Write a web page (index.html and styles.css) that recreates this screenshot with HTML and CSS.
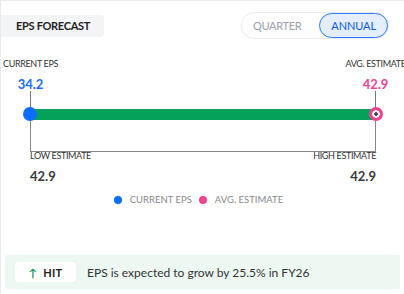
FILE: index.html
```html
<!DOCTYPE html>
<html lang="en">
<head>
    <meta charset="UTF-8">
    <meta name="viewport" content="width=device-width, initial-scale=1.0">
    <title>EPS Forecast</title>
    <link rel="stylesheet" href="styles.css">
</head>
<body>

    <div class="card">
        <div class="head">
            <div class="tab">EPS FORECAST</div>
            <div class="toggle">
                <span class="opt">QUARTER</span>
                <span class="opt active">ANNUAL</span>
            </div>
        </div>

        <div class="scale">
            <div class="pins">
                <div class="pin">
                    <span class="pin-label">CURRENT EPS</span>
                    <span class="pin-value current">34.2</span>
                    <span class="stem"></span>
                </div>
                <div class="pin">
                    <span class="pin-label">AVG. ESTIMATE</span>
                    <span class="pin-value avg">42.9</span>
                    <span class="stem"></span>
                </div>
            </div>
            <div class="bar">
                <span class="dot dot-current"></span>
                <span class="dot dot-avg"></span>
            </div>
            <div class="bracket"></div>
            <div class="ends">
                <div class="end">
                    <span class="end-label">LOW ESTIMATE</span>
                    <span class="end-value">42.9</span>
                </div>
                <div class="end end-right">
                    <span class="end-label">HIGH ESTIMATE</span>
                    <span class="end-value">42.9</span>
                </div>
            </div>
        </div>

        <div class="legend">
            <span class="key"><i class="swatch blue"></i>CURRENT EPS</span>
            <span class="key"><i class="swatch pink"></i>AVG. ESTIMATE</span>
        </div>

        <div class="note">
            <span class="badge"><span class="arrow">&#8593;</span>HIT</span>
            <span class="note-text">EPS is expected to grow by 25.5% in FY26</span>
        </div>
    </div>

</body>
</html>
```

FILE: styles.css
```css
body {
    margin: 0;
    font-family: Lato, "Open Sans", sans-serif;
    color: #333;
    background: #fff;
    overflow: hidden;
}
.card {
    border-left: 1px solid #e9ebef;
    border-top: 1px solid #e9ebef;
    height: 300px;
}

/* header */
.head {
    display: flex;
    justify-content: space-between;
    align-items: center;
    padding: 11px 15px 0 0;
}
.tab {
    background: #f3f4f6;
    border-radius: 0 4px 4px 0;
    padding: 0 14px 0 15px;
    height: 22px;
    line-height: 22px;
    font-size: 11px;
    font-weight: 700;
    letter-spacing: -0.3px;
    color: #222;
}
.toggle {
    display: flex;
    align-items: center;
    border: 1px solid #e8eaee;
    border-radius: 14px;
    height: 25px;
    padding-left: 11px;
}
.opt {
    font-size: 11px;
    letter-spacing: -0.3px;
    color: #9ca1ab;
    padding-right: 18px;
}
.opt.active {
    color: #0b5ddc;
    background: #e4eefe;
    border: 1px solid #2b7bf2;
    border-radius: 13px;
    height: 23px;
    line-height: 23px;
    padding: 0 11px;
    letter-spacing: -0.1px;
}

/* range chart */
.scale {
    padding: 0 28px 0 29px;
}
.pins {
    display: flex;
    justify-content: space-between;
    margin-top: 19px;
}
.pin {
    width: 1px;
    display: flex;
    flex-direction: column;
    align-items: center;
}
.pin-label {
    white-space: nowrap;
    font-size: 9px;
    line-height: 12px;
    letter-spacing: -0.35px;
    color: #333;
}
.pin-value {
    font-size: 13px;
    font-weight: 700;
    line-height: 14px;
    margin-top: 7px;
}
.pin-value.current { color: #1a6ef5; }
.pin-value.avg { color: #f2418f; }
.stem {
    width: 1px;
    height: 18px;
    background: #777;
}
.bar {
    position: relative;
    height: 11px;
    background: #04a15b;
}
.dot {
    position: absolute;
    top: -2px;
    width: 14px;
    height: 14px;
    border-radius: 50%;
    box-sizing: border-box;
}
.dot-current {
    left: -7px;
    background: #0d6efd;
}
.dot-avg {
    right: -7px;
    background: radial-gradient(circle, #444 0 1.5px, #fff 2px 3.5px, #f2418f 4px);
}
.bracket {
    height: 31px;
    border: 1px solid #888;
    border-top: 0;
}
.ends {
    display: flex;
    justify-content: space-between;
}
.end {
    display: flex;
    flex-direction: column;
}
.end-right { align-items: flex-end; }
.end-label {
    font-size: 9px;
    line-height: 10px;
    letter-spacing: -0.35px;
    color: #333;
    margin-top: -1px;
}
.end-value {
    font-size: 13px;
    font-weight: 700;
    line-height: 14px;
    margin-top: 8px;
    color: #3a3a3a;
}

/* legend */
.legend {
    display: flex;
    justify-content: center;
    gap: 7px;
    margin-top: 11px;
    padding-right: 8px;
    font-size: 9.5px;
    line-height: 12px;
    color: #888;
}
.key {
    display: flex;
    align-items: center;
    gap: 8px;
}
.swatch {
    width: 8px;
    height: 8px;
    border-radius: 50%;
}
.swatch.blue { background: #0d6efd; }
.swatch.pink { background: #f2418f; }

/* summary */
.note {
    display: flex;
    align-items: center;
    gap: 11px;
    margin: 49px 4px 0 4px;
    height: 34px;
    padding-left: 10px;
    background: #eef8f3;
    border-radius: 2px;
}
.badge {
    display: flex;
    align-items: center;
    justify-content: center;
    gap: 6px;
    width: 61px;
    height: 20px;
    background: #fff;
    border-radius: 4px;
    font-size: 11px;
    font-weight: 700;
    letter-spacing: 0.3px;
    color: #222;
}
.arrow {
    color: #12985a;
    font-weight: 700;
}
.note-text {
    font-size: 12px;
    color: #333;
}
```
